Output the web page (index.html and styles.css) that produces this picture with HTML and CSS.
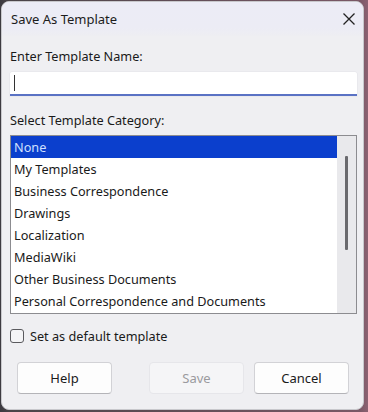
FILE: index.html
```html
<!DOCTYPE html>
<html>
<head>
<meta charset="utf-8">
<link rel="stylesheet" href="styles.css">
</head>
<body>
<div class="window">
  <div class="titlebar">
    <span class="title">Save As Template</span>
    <svg class="close" width="14" height="14" viewBox="0 0 14 14"><path d="M1.5 1.5 L12.5 12.5 M12.5 1.5 L1.5 12.5" stroke="#222" stroke-width="1.3" fill="none"/></svg>
  </div>
  <div class="content">
    <div class="label l1">Enter Template Name:</div>
    <div class="input"><span class="caret"></span></div>
    <div class="label l2">Select Template Category:</div>
    <div class="listbox">
      <div class="items">
        <div class="item sel">None</div>
        <div class="item">My Templates</div>
        <div class="item">Business Correspondence</div>
        <div class="item">Drawings</div>
        <div class="item">Localization</div>
        <div class="item">MediaWiki</div>
        <div class="item">Other Business Documents</div>
        <div class="item">Personal Correspondence and Documents</div>
      </div>
      <div class="scrollbar"><div class="thumb"></div></div>
    </div>
    <label class="check"><span class="box"></span>Set as default template</label>
    <div class="buttons">
      <div class="btn">Help</div>
      <div class="btn disabled">Save</div>
      <div class="btn">Cancel</div>
    </div>
  </div>
</div>
</body>
</html>
```
FILE: styles.css
```css
html, body {
  margin: 0;
  padding: 0;
  width: 368px;
  height: 412px;
  overflow: hidden;
}
body {
  background: linear-gradient(to right, #3c3a40 0px, #4a4448 10px, #7a5866 360px, #8c6272 368px);
  font-family: "Noto Sans", "Open Sans", sans-serif;
  font-size: 12.7px;
  color: #1a1a1a;
}
.window {
  box-sizing: border-box;
  margin: 1px 4px 2px 1px;
  width: 363px;
  height: 409px;
  border-radius: 8px;
  border: 1px solid #c8c8cc;
  background: #efeff2;
  overflow: hidden;
  display: flex;
  flex-direction: column;
}
.titlebar {
  height: 34px;
  flex: none;
  display: flex;
  align-items: center;
  justify-content: space-between;
  padding: 0 7px 0 9px;
  background: linear-gradient(to bottom, #ececf6 0, #ececf5 26px, #eeeef2 34px);
}
.title {
  font-size: 13px;
  color: #1c1c1c;
}
.close {
  position: relative;
  top: 0;
}
.content {
  display: flex;
  flex-direction: column;
  padding: 0 6px 0 8px;
}
.label {
  font-size: 12.7px;
  line-height: 16px;
  padding-left: 0;
}
.l1 { margin-top: 12px; }
.input {
  margin-top: 8px;
  height: 24px;
  box-sizing: border-box;
  background: #fff;
  border-bottom: 2px solid #5a72c4;
  border-radius: 2px 2px 0 0;
  box-shadow: 0 0 0 0.5px #e4e4e8;
  display: flex;
  align-items: center;
  padding-left: 4px;
}
.caret {
  width: 1px;
  height: 16px;
  background: #333;
}
.l2 { margin-top: 16px; }
.listbox {
  margin-top: 7px;
  height: 179px;
  box-sizing: border-box;
  border: 1px solid #8c8c90;
  background: #fff;
  display: flex;
}
.items {
  flex: 1;
  display: flex;
  flex-direction: column;
}
.item {
  height: 22px;
  line-height: 22px;
  padding-left: 3px;
  font-size: 12.7px;
  white-space: nowrap;
}
.item.sel {
  background: #0b3fcd;
  color: #cfe0ff;
}
.scrollbar {
  width: 19px;
  flex: none;
  background: #e9e9ec;
  display: flex;
  justify-content: center;
  padding-top: 20px;
  box-sizing: border-box;
}
.thumb {
  width: 3px;
  height: 94px;
  background: #6a6a6e;
  border-radius: 1px;
}
.check {
  display: flex;
  align-items: center;
  margin-top: 14px;
  padding-left: 0;
  font-size: 12.7px;
  line-height: 16px;
}
.box {
  width: 12px;
  height: 12px;
  border: 1px solid #5a5a5e;
  border-radius: 3px;
  background: #f4f4f6;
  margin-right: 6px;
}
.buttons {
  display: flex;
  margin-top: 18px;
  padding: 0 7px 0 7px;
}
.btn {
  width: 95px;
  height: 32px;
  box-sizing: border-box;
  border: 1px solid #d2d2d6;
  border-bottom-color: #b4b4b8;
  border-radius: 4px;
  background: #fdfdfd;
  display: flex;
  align-items: center;
  justify-content: center;
  font-size: 13px;
  color: #1a1a1a;
}
.btn.disabled {
  margin-left: 37px;
  margin-right: 10px;
  background: #f5f5f7;
  border-color: #e6e6ea;
  color: #9a9a9e;
}
```
